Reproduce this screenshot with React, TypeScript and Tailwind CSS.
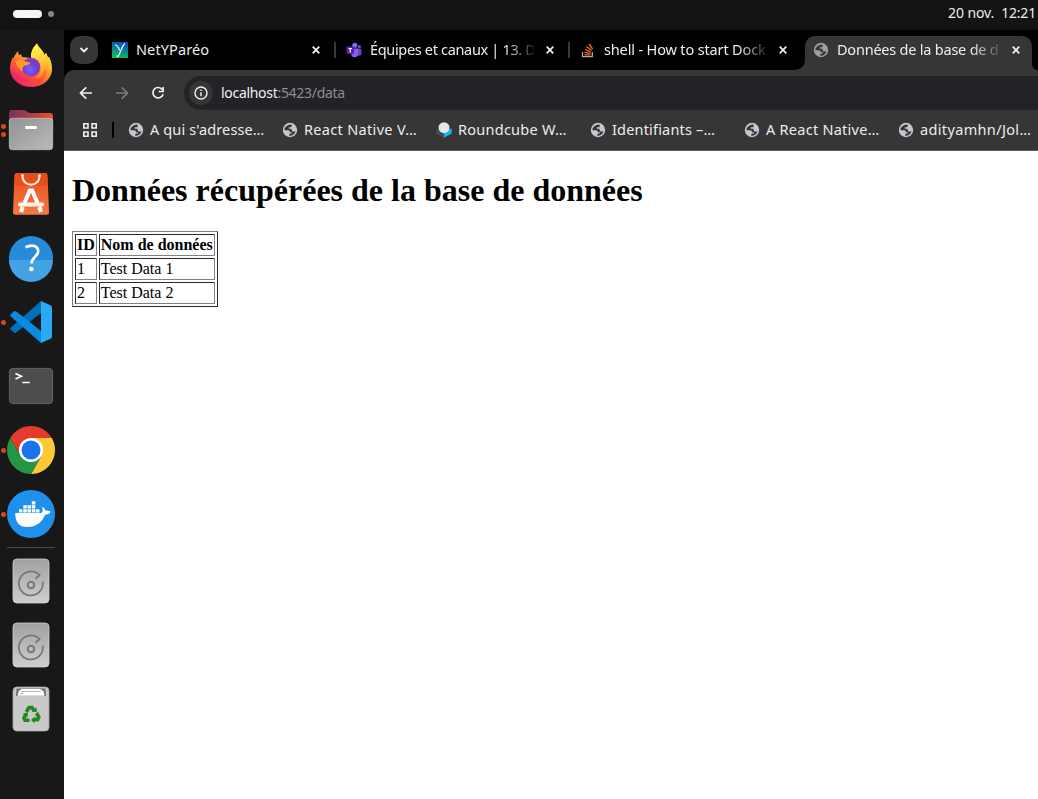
import type { ReactNode } from "react";

const DockItem = ({ children, dots = 0 }: { children: ReactNode; dots?: number }) => (
  <div className="relative flex h-16 w-16 shrink-0 items-center justify-center pr-[2px]">
    {dots > 0 && (
      <div className="absolute inset-y-0 left-[1px] flex flex-col justify-center gap-[3px]">
        {Array.from({ length: dots }, (_, i) => (
          <span key={i} className="h-[5px] w-[5px] rounded-full bg-[#d9471a]" />
        ))}
      </div>
    )}
    {children}
  </div>
);

const Firefox = () => (
  <svg width="48" height="48" viewBox="0 0 48 48">
    <defs>
      <linearGradient id="ffBody" x1="0.85" y1="0.1" x2="0.3" y2="1">
        <stop offset="0" stopColor="#fff44f" />
        <stop offset="0.35" stopColor="#ffb52b" />
        <stop offset="0.65" stopColor="#ff5a36" />
        <stop offset="1" stopColor="#e3107a" />
      </linearGradient>
      <linearGradient id="ffTail" x1="0.3" y1="0" x2="0.6" y2="1">
        <stop offset="0" stopColor="#fff251" />
        <stop offset="0.5" stopColor="#ffd23a" />
        <stop offset="1" stopColor="#ff8a20" />
      </linearGradient>
      <radialGradient id="ffGlobe" cx="0.45" cy="0.65" r="0.65">
        <stop offset="0" stopColor="#7a62f5" />
        <stop offset="0.6" stopColor="#6f3fd0" />
        <stop offset="1" stopColor="#9a35b8" />
      </radialGradient>
    </defs>
    <path d="M30 1.5c1.500 4.500 6 6.500 7.500 11.500l1.500-2c1 2 1.500 3 1.800 4.500l1.200-.7c2 4 3 8 3 12 0 11-9.500 18.300-21 18.300S3 37 3 26.500c0-5 1.500-9 3-11.500l.5 1.500c.8-3 2.700-5.500 4.800-7.500-.2 1.800 0 3 .7 4.200l2-1.200 1 3 9 1c-.6-6 2-11 6-14.500z" fill="url(#ffBody)" />
    <path d="M30 1.500c1.500 4.500 6 6.500 7.500 11.500l1.500-2c4 7 4 16-1 22-3 3-7 4-9 3 6-5 7-12 3-18l-8-3c0-5 2-10 6-13.500z" fill="url(#ffTail)" />
    <circle cx="24" cy="25" r="9.300" fill="url(#ffGlobe)" />
    <path d="M8 19c3-1.500 7-1.500 10 .2 2 1 4 .8 5.500 1.200-1 2.700-4.500 2.900-6.500 3.600-1.500 1-2 3-1 5.500-4-2-6.500-6-8-10.500z" fill="#ff9a24" />
    <path d="M4 29c3 9 12 13 21 10 7-2 12-7 13-13 3 8-3 18-14 18-9 0-17-6-20-15z" fill="#ff4c3c" opacity=".55" />
  </svg>
);

const Files = () => (
  <svg width="48" height="48" viewBox="0 0 48 48">
    <defs>
      <linearGradient id="fBack" x1="0" y1="0" x2="1" y2="0">
        <stop offset="0" stopColor="#7c3058" />
        <stop offset="0.5" stopColor="#a83e4b" />
        <stop offset="1" stopColor="#e95420" />
      </linearGradient>
      <linearGradient id="fFront" x1="0" y1="0" x2="1" y2="1">
        <stop offset="0" stopColor="#929292" />
        <stop offset="1" stopColor="#bababa" />
      </linearGradient>
    </defs>
    <path d="M2 24V7a3 3 0 0 1 3-3h12c2 0 3.500 3 6 3h20a3 3 0 0 1 3 3v14z" fill="url(#fBack)" />
    <rect x="2.300" y="12.300" width="43.400" height="31.400" rx="3" fill="url(#fFront)" stroke="#c6c6c6" strokeWidth=".7" />
    <rect x="18" y="20" width="12" height="3" rx="1.200" fill="#fff" />
  </svg>
);

const Software = () => (
  <svg width="48" height="48" viewBox="0 0 48 48">
    <defs>
      <linearGradient id="sw" x1="0" y1="0" x2="0" y2="1">
        <stop offset="0" stopColor="#ea4e1b" />
        <stop offset="1" stopColor="#f47a45" />
      </linearGradient>
    </defs>
    <path d="M10 3h28a2.500 2.500 0 0 1 2.500 2.300L42 42a2.500 2.500 0 0 1-2.500 2.700h-31A2.500 2.500 0 0 1 6 42L7.500 5.300A2.500 2.500 0 0 1 10 3z" fill="url(#sw)" />
    <path d="M7 16h34l-.5-10.500A2.500 2.500 0 0 0 38 3H10a2.500 2.500 0 0 0-2.500 2.500z" fill="#e64a15" opacity=".65" />
    <path d="M15.500 6c0 11.500 17 11.500 17 0" fill="none" stroke="#fff1e9" strokeWidth="2" />
    <circle cx="15.500" cy="5.500" r="1.300" fill="#fff" />
    <circle cx="32.500" cy="5.500" r="1.300" fill="#fff" />
    <path d="M14 42l1.700-5M34 42l-1.700-5M17.500 33L22.800 20.500h2.400L30.500 33" fill="none" stroke="#fff" strokeWidth="4" />
    <path d="M13 34.500h22" stroke="#fff5ee" strokeWidth="4" strokeLinecap="round" />
  </svg>
);

const Help = () => (
  <svg width="48" height="48" viewBox="0 0 48 48">
    <circle cx="24" cy="24" r="22" fill="#268bd9" />
    <path d="M2 26a22 22 0 0 0 44 0z" fill="#43a2e4" />
    <path d="M18.500 13.300c8-3.800 12.700-.6 12.700 4 0 5.200-6.700 5.700-6.700 12.200" fill="none" stroke="#fff" strokeWidth="2.700" />
    <circle cx="24.400" cy="35" r="2.300" fill="#fff" />
  </svg>
);

const VSCode = () => (
  <svg width="48" height="48" viewBox="0 0 48 48">
    <path d="M34 3L3.800 29.500a1.500 1.500 0 0 0 0 2.200l3 2.800a2 2 0 0 0 2.500.1L34 15z" fill="#0070b8" />
    <path d="M34 45L3.800 18.500a1.500 1.500 0 0 1 0-2.200l3-2.800a2 2 0 0 1 2.500-.1L34 33z" fill="#0a8be0" />
    <path d="M34 3l9.500 4.200A2.500 2.500 0 0 1 45 9.500v29a2.500 2.500 0 0 1-1.500 2.300L34 45z" fill="#2aa9f6" />
  </svg>
);

const Terminal = () => (
  <svg width="48" height="48" viewBox="0 0 48 48">
    <rect x="2.400" y="6.400" width="43.200" height="35.200" rx="3.500" fill="#4d4d4d" stroke="#686868" strokeWidth=".9" />
    <path d="M8.500 11.500l5.800 2.700-5.800 2.700M15.300 20.500h7.500" fill="none" stroke="#fff" strokeWidth="1.700" />
  </svg>
);

const Chrome = () => (
  <svg width="48" height="48" viewBox="0 0 48 48">
    <path d="M24 24L13.610 30 3.220 12A24 24 0 0 1 44.780 12H24z" fill="#e33b2e" />
    <path d="M24 12h20.780A24 24 0 0 1 24 48l10.390-18L24 24z" fill="#fcc934" />
    <path d="M24 24l10.390 6L24 48A24 24 0 0 1 3.220 12l10.390 18z" fill="#249446" />
    <circle cx="24" cy="24" r="12" fill="#fff" />
    <circle cx="24" cy="24" r="9.500" fill="#1a73e8" />
  </svg>
);

const Docker = () => (
  <svg width="48" height="48" viewBox="0 0 48 48">
    <circle cx="24" cy="24" r="24" fill="#2090ee" />
    <path d="M8.300 23h26.200c1.500-1 1.200-4 .6-6 2 .8 2.800 2 3.200 3.500 2 0 4 .2 5.300 1.200-1 2.300-3.200 3-5.600 3C35.500 32 29 37 20.500 37 12 37 8 32 8.300 23z" fill="#fff" />
    <path d="M12 19.200h3.500v3.300H12zM16.300 19.200h3.500v3.300h-3.500zM20.500 19.200H24v3.300h-3.500zM24.800 19.200h3.500v3.300h-3.500zM29 19.200h3.500v3.300H29zM16.300 15.200h3.500v3.300h-3.500zM20.500 15.200H24v3.300h-3.500zM24.800 15.200h3.500v3.300h-3.500zM24.800 11.200h3.500v3.300h-3.500z" fill="#fff" />
  </svg>
);

const Disk = () => (
  <svg width="48" height="48" viewBox="0 0 48 48">
    <defs>
      <linearGradient id="disk" x1="0" y1="0" x2="0" y2="1">
        <stop offset="0" stopColor="#a0a0a0" />
        <stop offset="1" stopColor="#cfcfcf" />
      </linearGradient>
    </defs>
    <rect x="6" y="2" width="36" height="44" rx="4" fill="url(#disk)" stroke="#d3d3d3" strokeWidth=".8" />
    <path d="M28.500 21.800l4-3.700A12 12 0 1 0 35.700 24.500" fill="none" stroke="#777" strokeWidth="1.800" />
    <circle cx="24" cy="28" r="3.300" fill="none" stroke="#777" strokeWidth="2" />
  </svg>
);

const Trash = () => (
  <svg width="48" height="48" viewBox="0 0 48 48">
    <rect x="6" y="2" width="36" height="44" rx="4" fill="#c9c9c9" stroke="#a8a8a8" strokeWidth=".8" />
    <path d="M9.500 3.500h29l.5 7.500H9z" fill="#747474" />
    <path d="M10.500 10.800l1.500-5 3-1.800h18l3.500 2.300 1 4.500z" fill="#fff" />
    <path d="M14 6.500h20M13 8.500h3" stroke="#a5a5a5" strokeWidth=".8" />
    <g fill="none" stroke="#25861f" strokeWidth="3.600">
      <path d="M19.300 27l2.700-4.400h3l2 3.300" />
      <path d="M29.500 28l2.300 4-1.200 2.600h-3.600" />
      <path d="M22.500 35.200h-4.500l-1-2.400 2-3.600" />
    </g>
    <path d="M25 27l5-.2-.8-4.800zM27.500 31.500v6.800l-3.500-3.300zM15.500 28.500l5-1 .7 4.500z" fill="#25861f" />
  </svg>
);

const Globe = ({ dark = false }: { dark?: boolean }) => (
  <svg width="16" height="16" viewBox="0 0 16 16" className="shrink-0">
    <circle cx="8" cy="8" r="7.200" fill={dark ? "#9aa0a6" : "#c4c7cf"} />
    <path d="M9.200 2.400C6.300 2.500 3.600 4.200 2.500 6.700v1.500h3.300c1.500 0 2.200.7 2.200 2h1.800v1.300l-2.300.2-.3 2c3 .3 5.500-1.500 6.300-4.200H11c-.8 0-1.200-.4-1.200-1.200 0-1-.6-1.500-1.500-1.500H6.800V5.200h1.500c1 0 1.400-.5 1.400-1.300 0-.6 0-1.200-.5-1.500z" fill="#363636" />
  </svg>
);

const Netyp = () => (
  <svg width="16" height="16" viewBox="0 0 16 16">
    <defs>
      <linearGradient id="ny" x1="0.6" y1="0" x2="0.3" y2="1">
        <stop offset="0" stopColor="#0650b8" />
        <stop offset="0.4" stopColor="#087ca0" />
        <stop offset="1" stopColor="#0fc34d" />
      </linearGradient>
    </defs>
    <path d="M0 0h16v16H0z" fill="url(#ny)" />
    <path d="M3 3c2 0 3.500 2 4.500 5.500M12.800 1.500C9.500 4.500 9 10 6 14.500c-.8 0-1-.6-1-1" fill="none" stroke="#fff" strokeWidth="1.200" />
  </svg>
);

const Teams = () => (
  <svg width="16" height="16" viewBox="0 0 16 16">
    <circle cx="13.300" cy="4.800" r="1.700" fill="#5059c9" />
    <path d="M10 7h5.500v4.500c0 2-2 2.800-3.500 2z" fill="#5b42c8" />
    <circle cx="8.800" cy="3.300" r="2.500" fill="#8b6cf0" />
    <path d="M5.500 6.500h7V11c0 2.800-2 4.300-4 4.300S5.200 14 5.200 11.500z" fill="#8a5cf0" />
    <rect x="0.500" y="4.500" width="7.500" height="7.500" rx="1" fill="#5420b8" />
    <path d="M2.500 6.500H6M4.250 6.500v4" stroke="#fff" strokeWidth="1.200" />
  </svg>
);

const Stack = () => (
  <svg width="16" height="16" viewBox="0 0 16 16">
    <path d="M2.500 10v4.700h9.800V10" fill="none" stroke="#a8abad" strokeWidth="1.300" />
    <path d="M4.500 12.800h6M4.500 10.300l6 1M5 7.500l5.700 2.400M6.500 4.500l5 3.900M9 2l3.600 5" stroke="#f36b21" strokeWidth="1.300" />
  </svg>
);

const Roundcube = () => (
  <svg width="16" height="16" viewBox="0 0 16 16">
    <path d="M.3 6.300L8 10.500v5.300L.3 11.500z" fill="#34535f" />
    <path d="M15.700 6.300L8 10.500v5.300l7.700-4.300z" fill="#12b5f5" />
    <circle cx="8" cy="5.700" r="5.500" fill="#e6e6e6" />
  </svg>
);

const Cross = () => (
  <svg width="8" height="8" viewBox="0 0 8 8" className="shrink-0">
    <path d="M.7.7l6.600 6.600M7.300.7L.7 7.300" stroke="#f1f1f1" strokeWidth="1.700" />
  </svg>
);

const Tab = ({ icon, title, label, divider }: { icon: ReactNode; title: string; label: string; divider?: boolean }) => (
  <div className="flex h-full w-[234px] shrink-0 items-center pl-2">
    {icon}
    <span className={`ml-2 w-[164px] shrink-0 overflow-hidden whitespace-nowrap text-[14.5px] ${label}`}>{title}</span>
    <span className="ml-3 flex">
      <Cross />
    </span>
    {divider && <span className="ml-[14px] h-4 w-[2px] bg-[#3a3a3a]" />}
  </div>
);

const fade = "[mask-image:linear-gradient(to_right,black_134px,transparent_168px)]";

const bookmarks = [
  { text: "A qui s'adresse…", spacing: "tracking-[0.12px]" },
  { text: "React Native V…", spacing: "tracking-[0.32px]" },
  { text: "Roundcube W…", spacing: "tracking-[0.25px]", cube: true },
  { text: "Identifiants –…", spacing: "tracking-[0.18px]" },
  { text: "A React Native…", spacing: "tracking-[0.26px]" },
  { text: "adityamhn/Jol…", spacing: "tracking-[0.35px]" },
];

const cell = "border border-t-[#2c2c2c] border-l-[#2c2c2c] border-b-[#808080] border-r-[#808080] p-px";

export default function App() {
  return (
    <div className="flex h-[799px] w-[1038px] flex-col overflow-hidden bg-[#181818] font-['Noto_Sans',sans-serif] text-[#ededed]">
      <header className="flex h-[30px] shrink-0 items-center bg-[#131313] pl-[13px] pr-[2px]">
        <span className="mt-[-2px] h-2 w-[29px] rounded-full bg-[#f5f5f5]" />
        <span className="mt-[-2px] ml-[6px] h-[6px] w-[6px] rounded-full bg-[#888]" />
        <div className="mt-[-5px] ml-auto flex gap-[7px] whitespace-nowrap text-[14px]">
          <span className="tracking-[-0.1px]">20 nov.</span>
          <span className="tracking-[-0.2px]">12:21</span>
        </div>
      </header>
      <div className="flex min-h-0 flex-1">
        <nav className="flex w-16 shrink-0 flex-col pt-1">
          <DockItem><Firefox /></DockItem>
          <DockItem dots={2}><Files /></DockItem>
          <DockItem><Software /></DockItem>
          <DockItem><Help /></DockItem>
          <DockItem dots={1}><VSCode /></DockItem>
          <DockItem><Terminal /></DockItem>
          <DockItem dots={1}><Chrome /></DockItem>
          <DockItem dots={1}><Docker /></DockItem>
          <div className="mt-[1px] mb-[1px] ml-[7px] h-px w-12 shrink-0 bg-[#4b4b4b]" />
          <DockItem><Disk /></DockItem>
          <DockItem><Disk /></DockItem>
          <DockItem><Trash /></DockItem>
        </nav>
        <main className="flex min-w-0 flex-1 flex-col overflow-hidden bg-black">
          <div className="flex h-10 shrink-0 items-center pl-[6px]">
            <button className="mr-[6px] flex h-7 w-7 shrink-0 items-center justify-center rounded-[10px] bg-[#363636]">
              <svg width="10" height="8" viewBox="0 0 10 8">
                <path d="M1.500 2L5 5.500 8.500 2" fill="none" stroke="#f1f1f1" strokeWidth="1.800" />
              </svg>
            </button>
            <Tab icon={<Netyp />} title="NetYParéo" label="tracking-[0.1px]" divider />
            <Tab icon={<Teams />} title="Équipes et canaux | 13. D" label={`tracking-[-0.33px] ${fade}`} divider />
            <div className="flex h-full w-[223px] shrink-0 items-center pl-2">
              <Stack />
              <span className={`ml-2 w-[164px] shrink-0 overflow-hidden whitespace-nowrap text-[14.5px] tracking-[-0.15px] ${fade}`}>shell - How to start Dock</span>
              <span className="ml-[11px] flex"><Cross /></span>
            </div>
            <div className="flex h-full w-[10px] shrink-0 items-end bg-[#363636]">
              <span className="h-full w-full rounded-br-[10px] bg-black" />
            </div>
            <div className="flex h-full w-[227px] shrink-0 items-end">
              <div className="flex h-[34px] w-full items-center rounded-t-[10px] bg-[#363636] pb-[6px] pl-2">
                <Globe dark />
                <span className={`ml-2 w-[164px] shrink-0 overflow-hidden whitespace-nowrap text-[14.5px] tracking-[-0.22px] ${fade}`}>Données de la base de d</span>
                <span className="ml-[11px] flex"><Cross /></span>
              </div>
            </div>
            <div className="h-full flex-1 bg-[#363636]">
              <div className="h-full w-full rounded-bl-[10px] bg-black" />
            </div>
          </div>
          <div className="flex h-[81px] shrink-0 flex-col rounded-tl-[10px] border-b border-[#5b5b5b] bg-[#363636]">
            <div className="mt-[6px] flex h-[34px] items-center">
              <svg width="120" height="34" viewBox="0 0 120 34" className="shrink-0" fill="none" strokeWidth="1.700">
                <path d="M28 17H17M22.200 11.300L16.500 17l5.700 5.700" stroke="#f1f1f1" />
                <path d="M52 17h11M57.800 11.300l5.700 5.700-5.700 5.700" stroke="#7c7c7c" />
                <path d="M98.300 13.600a5.200 5.200 0 1 0 .8 4.600M99.100 11v4.500h-4.500" stroke="#f1f1f1" />
              </svg>
              <div className="flex h-full flex-1 items-center rounded-l-full bg-[#222327] pl-[5px]">
                <span className="flex h-6 w-6 items-center justify-center rounded-full bg-[#363636]">
                  <svg width="14" height="14" viewBox="0 0 14 14" fill="none" stroke="#f1f1f1" strokeWidth="1.400">
                    <circle cx="7" cy="7" r="6" />
                    <path d="M7 6.200v4M7 3.600v1.400" />
                  </svg>
                </span>
                <span className="mt-[-2px] ml-2 whitespace-nowrap text-[14px] tracking-[-0.3px] text-[#8b8d92]">
                  <span className="text-[#f1f1f1]">localhost</span>:5423/data
                </span>
              </div>
            </div>
            <div className="flex h-10 items-center pl-[19px]">
              <svg width="14" height="14" viewBox="0 0 14 14" className="shrink-0" fill="none" stroke="#efefef" strokeWidth="1.600">
                <path d="M.8.8h4.200v4.200H.8zM9 .8h4.200v4.200H9zM.8 9h4.200v4.200H.8zM9 9h4.200v4.200H9z" />
              </svg>
              <span className="ml-[15px] mr-[14px] h-4 w-[2px] shrink-0 bg-black" />
              {bookmarks.map((b) => (
                <div key={b.text} className="flex w-[154px] shrink-0 items-center gap-[6px]">
                  {b.cube ? <Roundcube /> : <Globe />}
                  <span className={`whitespace-nowrap text-[14.5px] ${b.spacing}`}>{b.text}</span>
                </div>
              ))}
            </div>
          </div>
          <div className="flex flex-1 flex-col items-start bg-white px-2 font-['Liberation_Serif',serif] text-black">
            <h1 className="mt-[21px] mb-[22px] h-[37px] text-[32px] leading-[37px] font-bold">Données récupérées de la base de données</h1>
            <table className="border-separate border-spacing-[2px] border border-t-[#808080] border-r-[#2c2c2c] border-b-[#2c2c2c] border-l-[#808080] text-[16px] leading-[18px]">
              <tbody>
                <tr><th className={cell}>ID</th><th className={cell}>Nom de données</th></tr>
                <tr><td className={cell}>1</td><td className={cell}>Test Data 1</td></tr>
                <tr><td className={cell}>2</td><td className={cell}>Test Data 2</td></tr>
              </tbody>
            </table>
          </div>
        </main>
      </div>
    </div>
  );
}
